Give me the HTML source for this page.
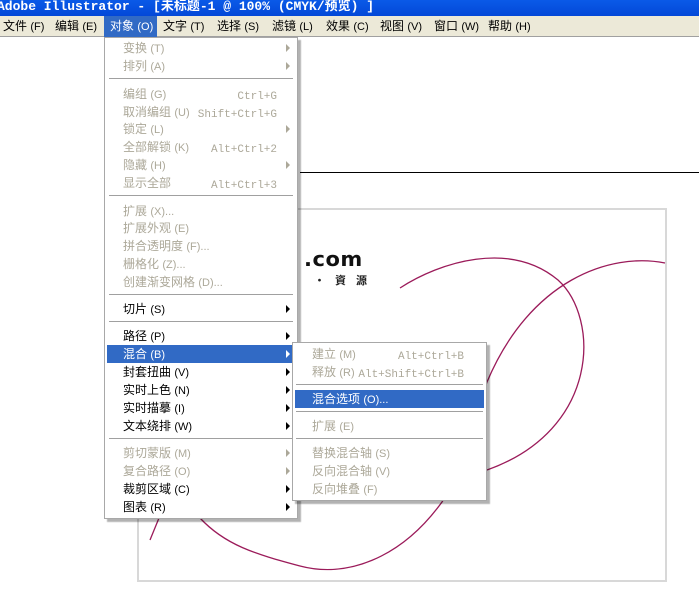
<!DOCTYPE html>
<html><head><meta charset="utf-8"><style>
*{margin:0;padding:0;box-sizing:border-box}
body{width:699px;height:608px;overflow:hidden;background:#fff;position:relative;font-family:"Liberation Sans","Noto Sans CJK SC",sans-serif;font-size:12px}
.a{position:absolute;white-space:nowrap}
#title{left:0;top:0;width:699px;height:16px;background:linear-gradient(#0a5ae8,#0348d8);color:#fff;font:bold 13px/14px "Liberation Mono","Noto Sans CJK SC",monospace;text-indent:-3px}
#mb{left:0;top:16px;width:699px;height:21px;background:#ece9d8;border-bottom:1px solid #a0a0a0}
.mi{position:absolute;top:3px;color:#000;font-size:12px;line-height:14px}
.menu{position:absolute;background:#fff;border:1px solid #a8a8a8;box-shadow:3px 3px 1px rgba(0,0,0,.3)}
.it{position:absolute;height:18px;line-height:18px;font-size:12px;color:#000;white-space:nowrap}
.dis{color:#aca899}
.sc{position:absolute;font-family:"Liberation Mono",monospace;font-size:11px;line-height:18px;padding-top:3px;white-space:nowrap}
.sep{position:absolute;height:1px;background:#a0a0a0}
.ar{position:absolute;width:0;height:0;border-top:4px solid transparent;border-bottom:4px solid transparent;border-left:4px solid #000}
.ar.d{border-left-color:#aca899}
.hl{position:absolute;background:#316ac5}
.k{font-size:11px;letter-spacing:0}
</style></head><body>
<div class="a" id="title">Adobe Illustrator - [未标题-1 @ 100% (CMYK/预览) ]</div>
<div class="a" id="mb">
<span class="mi" style="left:3px">文件 <span class="k">(F)</span></span>
<span class="mi" style="left:55px">编辑 <span class="k">(E)</span></span>
<span style="position:absolute;left:104px;top:0;width:53px;height:21px;background:#316ac5"></span>
<span class="mi" style="left:110px;color:#fff">对象 <span class="k">(O)</span></span>
<span class="mi" style="left:163px">文字 <span class="k">(T)</span></span>
<span class="mi" style="left:217px">选择 <span class="k">(S)</span></span>
<span class="mi" style="left:272px">滤镜 <span class="k">(L)</span></span>
<span class="mi" style="left:326px">效果 <span class="k">(C)</span></span>
<span class="mi" style="left:380px">视图 <span class="k">(V)</span></span>
<span class="mi" style="left:434px">窗口 <span class="k">(W)</span></span>
<span class="mi" style="left:488px">帮助 <span class="k">(H)</span></span>
</div>

<div class="a" style="left:300px;top:172px;width:399px;height:1px;background:#000"></div>
<div class="a" style="left:137px;top:208px;width:530px;height:374px;border:2px solid #d8d8d8"></div>
<div class="a" style="left:304px;top:248px;font:900 20px/22px 'DejaVu Sans',sans-serif;letter-spacing:0.5px;color:#111;transform:scaleX(1.05);transform-origin:left">.com</div>
<div class="a" style="left:314px;top:273px;font:bold 11px/14px 'Noto Sans CJK SC',sans-serif;color:#222;letter-spacing:10px">·資源</div>

<svg class="a" style="left:0;top:0" width="699" height="608">
<g fill="none" stroke="#9b1b5a" stroke-width="1.3">
<path d="M400,288 C440,262 510,240 558,280 C600,318 600,430 487,470"/>
<path d="M665,263 C610,252 530,280 487,382 C470,430 465,470 442,502 C400,560 345,578 300,566 C255,554 225,545 200,518"/>
<path d="M159,518 L150,540"/>
</g></svg>

<div class="menu" style="left:104px;top:37px;width:194px;height:482px">
<div class="it dis" style="left:18px;top:1px">变换 <span class="k">(T)</span></div><div class="ar d" style="left:181px;top:6px"></div>
<div class="it dis" style="left:18px;top:19px">排列 <span class="k">(A)</span></div><div class="ar d" style="left:181px;top:24px"></div>
<div class="sep" style="left:4px;top:40px;width:184px"></div>
<div class="it dis" style="left:18px;top:47px">编组 <span class="k">(G)</span></div><div class="it sc dis" style="left:auto;right:20px;top:47px">Ctrl+G</div>
<div class="it dis" style="left:18px;top:65px">取消编组 <span class="k">(U)</span></div><div class="it sc dis" style="left:auto;right:20px;top:65px">Shift+Ctrl+G</div>
<div class="it dis" style="left:18px;top:82px">锁定 <span class="k">(L)</span></div><div class="ar d" style="left:181px;top:87px"></div>
<div class="it dis" style="left:18px;top:100px">全部解锁 <span class="k">(K)</span></div><div class="it sc dis" style="left:auto;right:20px;top:100px">Alt+Ctrl+2</div>
<div class="it dis" style="left:18px;top:118px">隐藏 <span class="k">(H)</span></div><div class="ar d" style="left:181px;top:123px"></div>
<div class="it dis" style="left:18px;top:136px">显示全部</div><div class="it sc dis" style="left:auto;right:20px;top:136px">Alt+Ctrl+3</div>
<div class="sep" style="left:4px;top:157px;width:184px"></div>
<div class="it dis" style="left:18px;top:164px">扩展 <span class="k">(X)...</span></div>
<div class="it dis" style="left:18px;top:181px">扩展外观 <span class="k">(E)</span></div>
<div class="it dis" style="left:18px;top:199px">拼合透明度 <span class="k">(F)...</span></div>
<div class="it dis" style="left:18px;top:217px">栅格化 <span class="k">(Z)...</span></div>
<div class="it dis" style="left:18px;top:235px">创建渐变网格 <span class="k">(D)...</span></div>
<div class="sep" style="left:4px;top:256px;width:184px"></div>
<div class="it" style="left:18px;top:262px">切片 <span class="k">(S)</span></div><div class="ar" style="left:181px;top:267px"></div>
<div class="sep" style="left:4px;top:283px;width:184px"></div>
<div class="it" style="left:18px;top:289px">路径 <span class="k">(P)</span></div><div class="ar" style="left:181px;top:294px"></div>
<div class="hl" style="left:2px;top:307px;width:188px;height:18px"></div>
<div class="it" style="left:18px;top:307px;color:#fff">混合 <span class="k">(B)</span></div><div class="ar" style="left:181px;top:312px;border-left-color:#fff"></div>
<div class="it" style="left:18px;top:325px">封套扭曲 <span class="k">(V)</span></div><div class="ar" style="left:181px;top:330px"></div>
<div class="it" style="left:18px;top:343px">实时上色 <span class="k">(N)</span></div><div class="ar" style="left:181px;top:348px"></div>
<div class="it" style="left:18px;top:361px">实时描摹 <span class="k">(I)</span></div><div class="ar" style="left:181px;top:366px"></div>
<div class="it" style="left:18px;top:379px">文本绕排 <span class="k">(W)</span></div><div class="ar" style="left:181px;top:384px"></div>
<div class="sep" style="left:4px;top:400px;width:184px"></div>
<div class="it dis" style="left:18px;top:406px">剪切蒙版 <span class="k">(M)</span></div><div class="ar d" style="left:181px;top:411px"></div>
<div class="it dis" style="left:18px;top:424px">复合路径 <span class="k">(O)</span></div><div class="ar d" style="left:181px;top:429px"></div>
<div class="it" style="left:18px;top:442px">裁剪区域 <span class="k">(C)</span></div><div class="ar" style="left:181px;top:447px"></div>
<div class="it" style="left:18px;top:460px">图表 <span class="k">(R)</span></div><div class="ar" style="left:181px;top:465px"></div>
</div>

<div class="menu" style="left:292px;top:342px;width:195px;height:159px">
<div class="it dis" style="left:19px;top:2px">建立 <span class="k">(M)</span></div><div class="it sc dis" style="left:auto;right:22px;top:2px">Alt+Ctrl+B</div>
<div class="it dis" style="left:19px;top:20px">释放 <span class="k">(R)</span></div><div class="it sc dis" style="left:auto;right:22px;top:20px">Alt+Shift+Ctrl+B</div>
<div class="sep" style="left:3px;top:41px;width:187px"></div>
<div class="hl" style="left:2px;top:47px;width:189px;height:18px"></div>
<div class="it" style="left:19px;top:47px;color:#fff">混合选项 <span class="k">(O)...</span></div>
<div class="sep" style="left:3px;top:68px;width:187px"></div>
<div class="it dis" style="left:19px;top:74px">扩展 <span class="k">(E)</span></div>
<div class="sep" style="left:3px;top:95px;width:187px"></div>
<div class="it dis" style="left:19px;top:101px">替换混合轴 <span class="k">(S)</span></div>
<div class="it dis" style="left:19px;top:119px">反向混合轴 <span class="k">(V)</span></div>
<div class="it dis" style="left:19px;top:137px">反向堆叠 <span class="k">(F)</span></div>
</div>
</body></html>
